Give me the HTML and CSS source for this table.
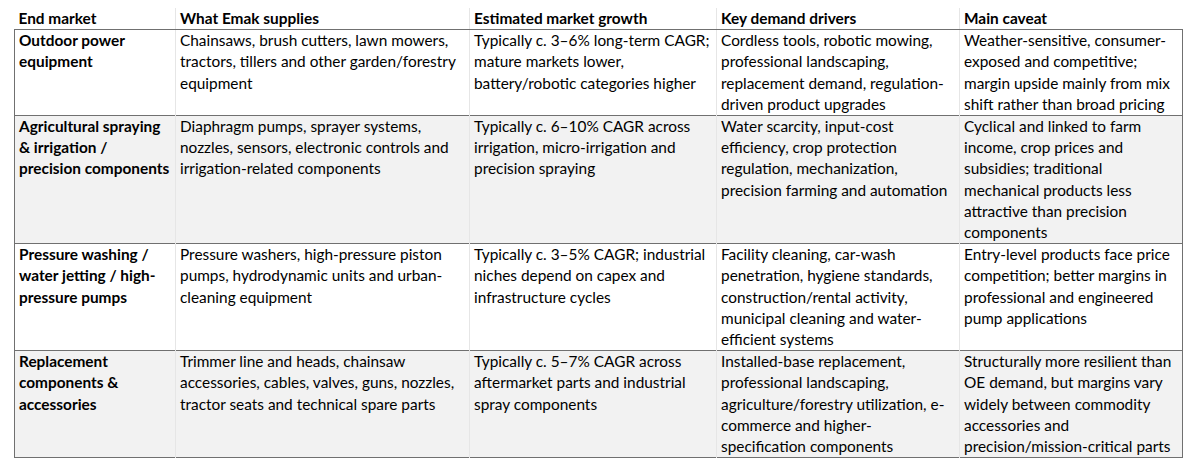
FILE: index.html
```html
<!DOCTYPE html>
<html lang="en">
<head>
<meta charset="utf-8">
<title>Emak end markets</title>
<link rel="stylesheet" href="styles.css">
</head>
<body>
<div class="wrap">
<table class="grid">
<colgroup>
<col class="c1"><col class="c2"><col class="c3"><col class="c4"><col class="c5">
</colgroup>
<thead>
<tr>
<th>End market</th>
<th>What Emak supplies</th>
<th>Estimated market growth</th>
<th>Key demand drivers</th>
<th>Main caveat</th>
</tr>
</thead>
<tbody>
<tr>
<td class="lbl">Outdoor power equipment</td>
<td>Chainsaws, brush cutters, lawn mowers, tractors, tillers and other garden/forestry equipment</td>
<td>Typically c. 3–6% long-term CAGR; mature markets lower, battery/robotic categories higher</td>
<td class="drv">Cordless tools, robotic mowing, professional landscaping, replacement demand, regulation-driven product upgrades</td>
<td>Weather-sensitive, consumer-exposed and competitive; margin upside mainly from mix shift rather than broad pricing</td>
</tr>
<tr class="alt">
<td class="lbl">Agricultural spraying &amp; irrigation / precision components</td>
<td>Diaphragm pumps, sprayer systems, nozzles, sensors, electronic controls and irrigation-related components</td>
<td>Typically c. 6–10% CAGR across irrigation, micro-irrigation and precision spraying</td>
<td class="drv">Water scarcity, input-cost efficiency, crop protection regulation, mechanization, precision farming and automation</td>
<td>Cyclical and linked to farm income, crop prices and subsidies; traditional mechanical products less attractive than precision components</td>
</tr>
<tr>
<td class="lbl">Pressure washing / water jetting / high-pressure pumps</td>
<td>Pressure washers, high-pressure piston pumps, hydrodynamic units and urban-cleaning equipment</td>
<td>Typically c. 3–5% CAGR; industrial niches depend on capex and infrastructure cycles</td>
<td class="drv">Facility cleaning, car-wash penetration, hygiene standards, construction/rental activity, municipal cleaning and water-efficient systems</td>
<td>Entry-level products face price competition; better margins in professional and engineered pump applications</td>
</tr>
<tr class="alt">
<td class="lbl">Replacement components &amp; accessories</td>
<td>Trimmer line and heads, chainsaw accessories, cables, valves, guns, nozzles, tractor seats and technical spare parts</td>
<td>Typically c. 5–7% CAGR across aftermarket parts and industrial spray components</td>
<td class="drv">Installed-base replacement, professional landscaping, agriculture/forestry utilization, e-commerce and higher-specification components</td>
<td>Structurally more resilient than OE demand, but margins vary widely between commodity accessories and precision/mission-critical parts</td>
</tr>
</tbody>
</table>
</div>
</body>
</html>
```
FILE: styles.css
```css
html, body {
  margin: 0;
  padding: 0;
  background: #ffffff;
}
.wrap {
  padding: 8px 0 0 14px;
}
.grid {
  border-collapse: collapse;
  table-layout: fixed;
  width: 1168px;
  font-family: Lato, "Open Sans", sans-serif;
  font-size: 15.4px;
  line-height: 21.2px;
  color: #000000;
}
.c1 { width: 161px; }
.c2 { width: 294px; }
.c3 { width: 247px; }
.c4 { width: 243px; }
.c5 { width: 223px; }
.grid th, .grid td {
  text-align: left;
  vertical-align: top;
  padding: 0 2px 0 4px;
  border-left: 1px solid #e6e6e6;
}
.grid th {
  font-weight: bold;
  border-bottom: 1px solid #707070;
}
.grid th:first-child {
  border-left: none;
}
.grid td:first-child {
  border-left: 1px solid #707070;
}
.grid td:last-child {
  border-right: 1px solid #707070;
}
.grid tbody tr {
  border-bottom: 1px solid #707070;
}
.grid .lbl {
  font-weight: bold;
}
.grid .drv {
  padding-right: 7px;
}
.grid tr.alt td {
  background: #f2f2f2;
}
```
